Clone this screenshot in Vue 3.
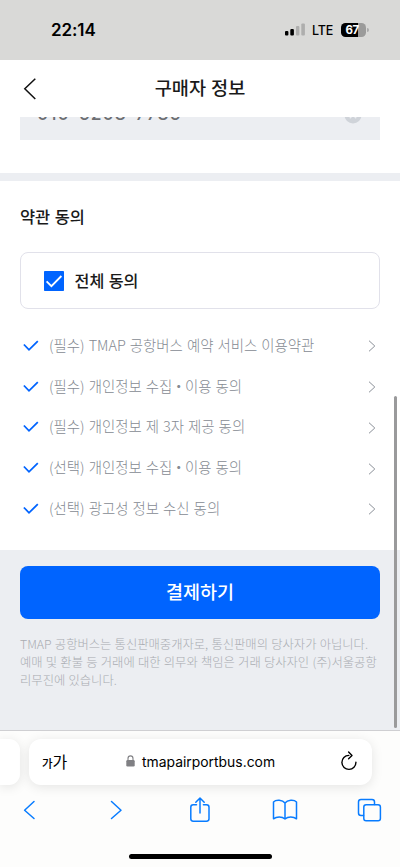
<script setup>
const terms = [
  ['(필수) TMAP 공항버스 예약 서비스 이용약관'],
  ['(필수) 개인정보 수집', '이용 동의'],
  ['(필수) 개인정보 제 3자 제공 동의'],
  ['(선택) 개인정보 수집', '이용 동의'],
  ['(선택) 광고성 정보 수신 동의'],
]
const notice = [
  'TMAP 공항버스는 통신판매중개자로, 통신판매의 당사자가 아닙니다.',
  '예매 및 환불 등 거래에 대한 의무와 책임은 거래 당사자인 (주)서울공항',
  '리무진에 있습니다.',
]
</script>

<template>
  <div class="screen">
    <div class="status">
      <span class="time">22:14</span>
      <svg class="signal" width="21" height="13" viewBox="0 0 21 13">
        <rect x="0" y="8" width="3.4" height="4.5" rx="1" fill="#000" />
        <rect x="5.3" y="6" width="3.6" height="6.5" rx="1" fill="#000" />
        <rect x="11" y="3" width="3.4" height="9.5" rx="1" fill="#aeaead" />
        <rect x="16.3" y="0.4" width="3.6" height="12.1" rx="1" fill="#aeaead" />
      </svg>
      <span class="lte">LTE</span>
      <div class="battery"><span>67</span></div>
      <i class="nub"></i>
    </div>

    <header class="head">
      <svg class="back" width="14" height="22" viewBox="0 0 14 22"><path d="M12.3 .8 L1.8 10.8 L12.3 21" fill="none" stroke="#111" stroke-width="1.5" /></svg>
      <h1>구매자 정보</h1>
    </header>

    <div class="field-wrap">
      <div class="field">
        <span>010-5208-7785</span>
        <svg width="18" height="18" viewBox="0 0 18 18"><circle cx="9" cy="9" r="8.5" fill="#cfd3d9" /><path d="M5.8 5.8l6.4 6.4M12.2 5.8l-6.4 6.4" stroke="#eceef2" stroke-width="1.4" /></svg>
      </div>
    </div>
    <div class="band"></div>

    <section class="terms">
      <h2>약관 동의</h2>
      <div class="all">
        <svg width="20" height="20" viewBox="0 0 20 20"><rect width="20" height="20" rx="0.8" fill="#0064ff" /><path d="M2.6 10.4 L7.4 15.2 L17.4 5" fill="none" stroke="#fff" stroke-width="1.8" /></svg>
        <span>전체 동의</span>
      </div>
      <ul>
        <li v-for="(t, i) in terms" :key="i">
          <svg class="tick" width="16" height="12" viewBox="0 0 16 12"><path d="M.9 4.5 L6 9.8 L14.8 1.2" fill="none" stroke="#0064ff" stroke-width="1.8" /></svg>
          <span class="label">{{ t[0] }}<template v-if="t[1]"><b>・</b>{{ t[1] }}</template></span>
          <svg class="go" width="8" height="12" viewBox="0 0 8 12"><path d="M1 .7 L6.8 6 L1 11.3" fill="none" stroke="#8b9098" stroke-width="1" /></svg>
        </li>
      </ul>
    </section>

    <section class="pay">
      <button>결제하기</button>
      <p><span v-for="n in notice" :key="n">{{ n }}</span></p>
    </section>

    <footer class="safari">
      <div class="tabs">
        <div class="prev"></div>
        <div class="address">
          <span class="aa"><small>가</small>가</span>
          <svg class="lock" width="9" height="12" viewBox="0 0 9 12"><rect x="0.3" y="5" width="8.4" height="6.5" rx="1.2" fill="#808084" /><path d="M2 5.5V3.4C2 0 7 0 7 3.4V5.5" fill="none" stroke="#808084" stroke-width="1.1" /></svg>
          <span class="url">tmapairportbus.com</span>
          <svg class="reload" width="18" height="20" viewBox="0 0 18 20"><path d="M8.8 4.4A7 7 0 1 0 15.9 11.2" fill="none" stroke="#000" stroke-width="1.4" stroke-linecap="round" /><path d="M8.6 1L12 4.4L8.6 7.8" fill="none" stroke="#000" stroke-width="1.4" stroke-linecap="round" stroke-linejoin="round" /></svg>
        </div>
      </div>
      <svg class="tools" width="400" height="30" viewBox="0 795 400 30" fill="none" stroke="#087cff" stroke-width="1.5" stroke-linecap="round" stroke-linejoin="round">
        <path d="M34 801.5L24.6 810.2L34 818.5" />
        <path d="M111.5 801.5L121 810.2L111.5 818.5" />
        <path d="M196.5 804.8H193.2Q190.8 804.8 190.8 807.2V818.8Q190.8 821.2 193.2 821.2H206.5Q209 821.2 209 818.8V807.2Q209 804.8 206.5 804.8H203.4M200 813V798.5M195.8 802.3L200 798L204.2 802.3" />
        <path d="M285 803V819M285 803C282.5 799.8 276 799.5 273.5 802V818.8C276.5 816.5 282 816.3 285 819C288 816.3 293.5 816.5 296.5 818.8V802C294 799.5 287.5 799.8 285 803Z" />
        <rect x="363.8" y="804.7" width="16.6" height="16" rx="2.3" />
        <path d="M363.5 815.5H361Q358.5 815.5 358.5 813V802Q358.5 799.5 361 799.5H372Q374.5 799.5 374.5 802V804.5" />
      </svg>
      <div class="home"></div>
    </footer>
    <div class="scrollbar"></div>
  </div>
</template>

<style>
body { margin: 0; background: #fff; }
</style>

<style scoped>
* { box-sizing: border-box; }
.screen { position: relative; width: 400px; height: 867px; overflow: hidden; background: #fff; display: flex; flex-direction: column; font-family: "Noto Sans CJK KR", sans-serif; color: #1a1a1a; }
.status { height: 60px; flex: none; background: #d9d9d7; display: flex; align-items: center; padding-left: 51px; font-family: Inter, sans-serif; color: #000; }
.time { width: 234px; font-size: 17px; font-weight: 600; letter-spacing: -.1px; }
.signal { margin-top: -1px; }
.lte { margin-left: 6px; width: 29px; font-size: 12.5px; font-weight: 500; letter-spacing: -.2px; }
.battery { width: 25px; height: 14px; padding-right: 3px; border-radius: 4.5px; background: linear-gradient(90deg, #000 67%, #9b9b9a 67%); color: #fff; font-size: 11.5px; font-weight: 700; letter-spacing: -.7px; line-height: 14px; text-align: center; }
.nub { width: 1.5px; height: 4px; margin-left: 1px; background: #aaa; border-radius: 0 2px 2px 0; }
.head { height: 57px; flex: none; display: grid; grid-template-columns: 50px 1fr 50px; align-items: center; }
.back { margin-left: 23px; }
h1 { margin: -3px 0 0; text-align: center; font-size: 18.6px; line-height: 28px; font-weight: 500; word-spacing: .8px; }
.field-wrap { height: 56px; flex: none; padding: 0 20px; overflow: hidden; }
.field { height: 52px; margin-top: -29px; padding: 0 17px 1px; background: #eceef2; display: flex; align-items: center; justify-content: space-between; color: #6c6e72; font: 500 17.5px Inter, sans-serif; letter-spacing: 1px; }
.field svg { margin: 2px 1px 0 0; }
.band { height: 8px; flex: none; background: #eceef2; }
.terms { height: 369px; flex: none; padding: 23px 20px 0; }
h2 { margin: 0; font-size: 16.4px; line-height: 24px; font-weight: 500; word-spacing: .8px; }
.all { margin-top: 24px; height: 57px; border: 1px solid #e1e1ea; border-radius: 8px; display: flex; align-items: center; padding-left: 23px; gap: 10.5px; font-size: 16.2px; font-weight: 500; word-spacing: .8px; }
.all span { margin-top: -2px; }
ul { list-style: none; margin: 16px 0 0; padding: 0; }
li { height: 40.75px; display: flex; align-items: center; color: #858a92; font-size: 14.45px; font-weight: 300; word-spacing: .8px; }
.tick { margin: 1px 10px 0 3px; }
.label { flex: 1; white-space: nowrap; margin-top: -2px; }
.label b { font-weight: 400; margin: 0 -.9px; }
.go { margin: 2px 4px 0 0; }
.pay { height: 180px; flex: none; background: #eceef2; padding: 16px 20px 0; }
button { display: block; width: 360px; height: 53px; border: 0; border-radius: 8px; background: #0064ff; color: #fff; font: 500 18.5px/50px "Noto Sans CJK KR", sans-serif; padding: 0 0 3px; }
p { margin: 16px 0 0; display: flex; flex-direction: column; color: #a9acb1; font-size: 12.3px; line-height: 18.2px; font-weight: 300; word-spacing: .5px; }
p span { white-space: nowrap; }
.safari { height: 137px; flex: none; border-top: 1px solid #cfcfd2; background: #fdfdfc; display: flex; flex-direction: column; }
.tabs { display: flex; gap: 9px; height: 64px; padding-top: 8px; }
.prev { width: 20px; height: 46px; border-radius: 0 11px 11px 0; background: #fff; box-shadow: 0 2px 12px rgba(0,0,0,.1); }
.address { width: 343px; height: 46px; border-radius: 12px; background: #fff; box-shadow: 0 2px 12px rgba(0,0,0,.1); display: flex; align-items: center; color: #000; }
.aa { margin: -2px 0 0 13px; width: 84px; font-size: 16px; white-space: nowrap; }
.aa small { font-size: 11.5px; font-weight: 500; }
.lock { margin: -2px 7px 0 0; }
.url { width: 198px; margin-top: -1px; font: 400 13.9px Inter, sans-serif; }
.reload { margin-top: -3px; }
.tools { flex: none; }
.home { width: 143px; height: 5px; margin: 29px 0 0 129px; border-radius: 3px; background: #000; }
.scrollbar { position: absolute; left: 394px; top: 396px; width: 3px; height: 332px; border-radius: 2px; background: #9a9a9b; }
</style>
